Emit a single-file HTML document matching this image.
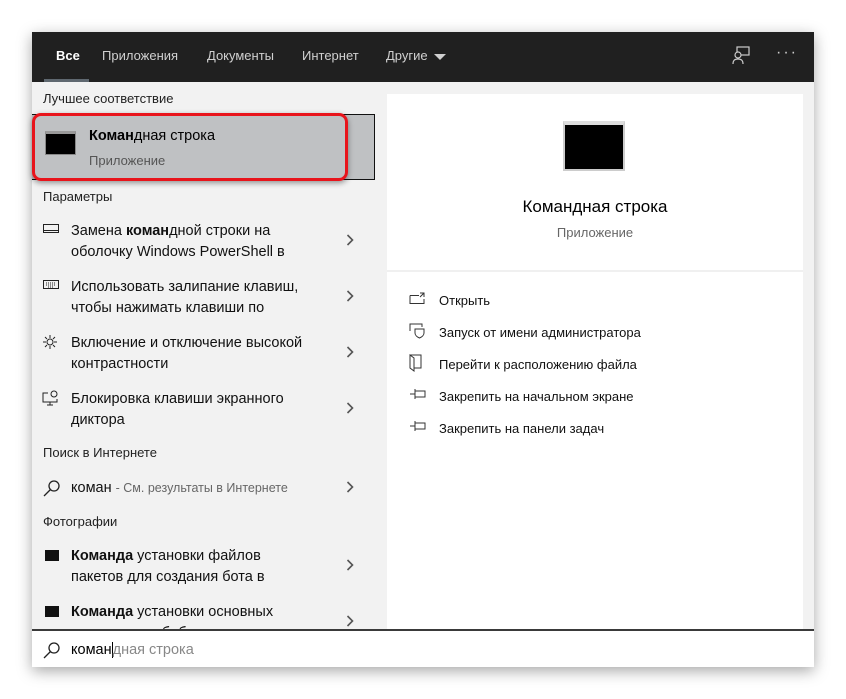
<!DOCTYPE html>
<html><head><meta charset="utf-8"><style>
*{margin:0;padding:0;box-sizing:border-box}
body{width:846px;height:699px;background:#fff;font-family:"Segoe UI","Liberation Sans",sans-serif;position:relative;overflow:hidden;color:#000}
.win{position:absolute;left:32px;top:32px;width:782px;height:635px;background:#f2f2f2;box-shadow:0 4px 14px rgba(0,0,0,.35)}
.hdr{position:absolute;left:0;top:0;width:782px;height:50px;background:#202020}
.tab{position:absolute;top:16px;font-size:13px;color:#d0d0d0}
.a{position:absolute}
.sec{position:absolute;left:11px;font-size:13px;color:#222}
.it{position:absolute;left:39px;font-size:14.5px;line-height:21px;color:#111}
.chev{position:absolute;left:314px}
.card{position:absolute;left:355px;top:62px;width:416px;height:536px;background:#fff}
.act{position:absolute;left:52px;font-size:13px;color:#111}
.ico{position:absolute;left:22px}
</style></head><body>
<svg width="0" height="0" style="position:absolute"><defs><symbol id="cv" viewBox="0 0 8 12"><path d="M1.5 1l5 5-5 5" fill="none" stroke="#555" stroke-width="1.6"/></symbol></defs></svg>
<div class="win">
 <div class="hdr">
  <div class="tab" style="left:24px;color:#fff;font-weight:bold">Все</div>
  <div class="a" style="left:12px;top:47px;width:45px;height:3px;background:#5f6870"></div>
  <div class="tab" style="left:70px">Приложения</div>
  <div class="tab" style="left:175px">Документы</div>
  <div class="tab" style="left:270px">Интернет</div>
  <div class="tab" style="left:354px">Другие</div>
  <svg class="a" style="left:402px;top:21px" width="12" height="8"><path d="M0 1h12L6 7z" fill="#d0d0d0"/></svg>
  <svg class="a" style="left:700px;top:14px" width="20" height="20" fill="none" stroke="#ccc" stroke-width="1.2"><rect x="5" y="1" width="12" height="8"/><circle cx="6" cy="9" r="3" fill="#202020"/><path d="M1 18c0-4 2-5 5-5s5 1 5 5"/></svg>
  <div class="a" style="left:744px;top:12px;color:#ccc;font-size:16px;letter-spacing:2px">···</div>
 </div>

 <div class="sec" style="top:59px">Лучшее соответствие</div>
 <div class="a" style="left:0;top:82px;width:343px;height:66px;background:#bfc1c3;border:1px solid #111;border-left:none"></div>
 <div class="a" style="left:0;top:81px;width:316px;height:68px;border:3px solid #e8141b;border-radius:9px;box-shadow:0 2px 6px rgba(0,0,0,.4)"></div>
 <div class="a" style="left:13px;top:99px;width:31px;height:24px;background:#000;border:1px solid #888;border-top:3px solid #999"></div>
 <div class="a" style="left:57px;top:96px;font-size:14.5px"><b>Коман</b>дная строка</div>
 <div class="a" style="left:57px;top:121px;font-size:13px;color:#555">Приложение</div>

 <div class="sec" style="top:157px">Параметры</div>
 <svg class="a" style="left:11px;top:192px" width="16" height="10" fill="none" stroke="#222"><rect x=".5" y=".5" width="15" height="8"/><path d="M1 6.5h14"/></svg>
 <div class="it" style="top:189px">Замена <b>коман</b>дной строки на<br>оболочку Windows PowerShell в</div>
 <svg class="chev" style="top:202px" width="8" height="12"><use href="#cv"/></svg>
 <svg class="a" style="left:11px;top:248px" width="16" height="10" fill="none" stroke="#222"><rect x=".5" y=".5" width="15" height="8"/><path d="M3 3h10M3 5h10M5 7h6" stroke-dasharray="1 1"/></svg>
 <div class="it" style="top:245px">Использовать залипание клавиш,<br>чтобы нажимать клавиши по</div>
 <svg class="chev" style="top:258px" width="8" height="12"><use href="#cv"/></svg>
 <svg class="a" style="left:10px;top:302px" width="16" height="16" fill="none" stroke="#222"><circle cx="8" cy="8" r="3"/><path d="M8 1v3M8 12v3M1 8h3M12 8h3M3 3l2 2M11 11l2 2M13 3l-2 2M5 11l-2 2"/></svg>
 <div class="it" style="top:301px">Включение и отключение высокой<br>контрастности</div>
 <svg class="chev" style="top:314px" width="8" height="12"><use href="#cv"/></svg>
 <svg class="a" style="left:10px;top:358px" width="18" height="16" fill="none" stroke="#222"><path d="M6 3H1v9h14v-3M5 15h6M8 12v3"/><circle cx="12" cy="4" r="3"/></svg>
 <div class="it" style="top:357px">Блокировка клавиши экранного<br>диктора</div>
 <svg class="chev" style="top:370px" width="8" height="12"><use href="#cv"/></svg>

 <div class="sec" style="top:413px">Поиск в Интернете</div>
 <svg class="a" style="left:11px;top:447px" width="18" height="18" fill="none" stroke="#222" stroke-width="1.3"><circle cx="11" cy="7" r="5"/><path d="M7.5 10.5L1 17"/></svg>
 <div class="it" style="top:446px">коман <span style="font-size:12.5px;color:#666">- См. результаты в Интернете</span></div>
 <svg class="chev" style="top:449px" width="8" height="12"><use href="#cv"/></svg>

 <div class="sec" style="top:482px">Фотографии</div>
 <div class="a" style="left:13px;top:518px;width:14px;height:11px;background:#111"></div>
 <div class="it" style="top:514px"><b>Команда</b> установки файлов<br>пакетов для создания бота в</div>
 <svg class="chev" style="top:527px" width="8" height="12"><use href="#cv"/></svg>
 <div class="a" style="left:13px;top:574px;width:14px;height:11px;background:#111"></div>
 <div class="it" style="top:570px"><b>Команда</b> установки основных<br>компонентов библиотек для</div>
 <svg class="chev" style="top:583px" width="8" height="12"><use href="#cv"/></svg>

 <div class="card">
  <div class="a" style="left:176px;top:27px;width:62px;height:50px;background:#000;border:2px solid #ccc;border-top:4px solid #ddd"></div>
  <div class="a" style="left:0;width:416px;text-align:center;top:103px;font-size:17px">Командная строка</div>
  <div class="a" style="left:0;width:416px;text-align:center;top:131px;font-size:13px;color:#666">Приложение</div>
  <div class="a" style="left:0;top:176px;width:416px;height:2px;background:#f0f0f0"></div>
  <svg class="ico" style="top:198px" width="16" height="14" fill="none" stroke="#333"><path d="M1 3.5h9M1 3.5v8h14V7M11 1h4v4M15 1l-4 4"/></svg>
  <div class="act" style="top:199px">Открыть</div>
  <svg class="ico" style="top:229px" width="16" height="16" fill="none" stroke="#333"><path d="M1 8V1h12v3M6 6h9v4c0 2-2 4-4.5 5C8 14 6 12 6 10z"/></svg>
  <div class="act" style="top:231px">Запуск от имени администратора</div>
  <svg class="ico" style="top:260px" width="14" height="18" fill="none" stroke="#333"><path d="M1 1h11v13H5M1 1l4 3v13l-4-3z"/></svg>
  <div class="act" style="top:263px">Перейти к расположению файла</div>
  <svg class="ico" style="top:294px" width="18" height="12" fill="none" stroke="#333"><path d="M1 6h5M6 1v10M6 3h10v6H6"/></svg>
  <div class="act" style="top:295px">Закрепить на начальном экране</div>
  <svg class="ico" style="top:326px" width="18" height="12" fill="none" stroke="#333"><path d="M1 6h5M6 1v10M6 3h10v6H6"/></svg>
  <div class="act" style="top:327px">Закрепить на панели задач</div>
 </div>

 <div class="a" style="left:0;top:597px;width:782px;height:38px;background:#fff;border-top:2px solid #3a3a3a"></div>
 <svg class="a" style="left:11px;top:609px" width="18" height="18" fill="none" stroke="#222" stroke-width="1.3"><circle cx="11" cy="7" r="5"/><path d="M7.5 10.5L1 17"/></svg>
 <div class="a" style="left:39px;top:610px;font-size:14.5px">коман<span style="border-left:1px solid #000;color:#888">дная строка</span></div>
</div>
</body></html>
